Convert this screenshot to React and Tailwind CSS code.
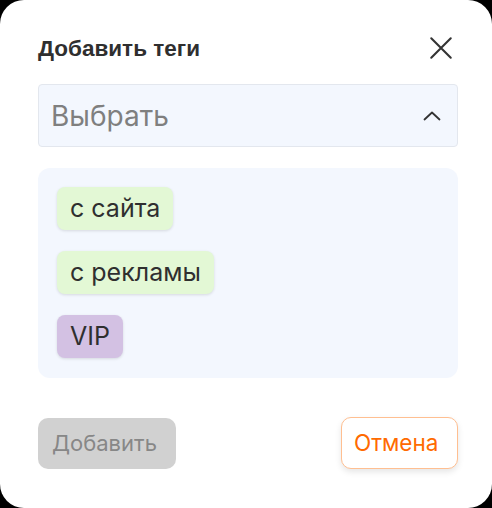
import { useState } from 'react';

const TAGS = [
  { name: 'с сайта', cls: 'bg-[#e3f8d5]' },
  { name: 'с рекламы', cls: 'bg-[#e3f8d5]' },
  { name: 'VIP', cls: 'bg-[#d3c1e3]' },
];

export default function App() {
  const [open, setOpen] = useState(true);

  return (
    <div className="w-[492px] h-[508px] bg-black">
      <div className="w-full h-full bg-white rounded-[24px] pl-[38px] pr-[34px] pt-[34px] flex flex-col font-['Inter',sans-serif]">
        <div className="flex items-center justify-between h-[28px]">
          <h2 className="text-[22.5px] font-bold text-[#2f2f2f] font-['Liberation_Sans',sans-serif] mt-[1px]">Добавить теги</h2>
          <button type="button" className="mr-[4px] text-[#333]">
            <svg width="26" height="26" viewBox="0 0 24 24" fill="none" stroke="currentColor" strokeWidth="1.9" strokeLinecap="round">
              <path d="M3 3 L21 21 M21 3 L3 21" />
            </svg>
          </button>
        </div>

        <button
          type="button"
          onClick={() => setOpen(!open)}
          className="mt-[22px] h-[63px] w-full rounded-[4px] border border-[#e3e7ee] bg-[#f3f7fe] flex items-center justify-between pl-[12px] pr-[16px]"
        >
          <span className="text-[28px] text-[#7f7f7f]">Выбрать</span>
          <svg width="18" height="10" viewBox="0 0 18 10" fill="none" stroke="#333" strokeWidth="1.8" strokeLinecap="round" strokeLinejoin="round">
            <path d="M1.5 8.5 L9 1.5 L16.5 8.5" />
          </svg>
        </button>

        {open && (
          <div className="mt-[21px] h-[210px] rounded-[12px] bg-[#f3f7fe] pt-[19px] pl-[19px] flex flex-col items-start gap-[21px]">
            {TAGS.map((t) => (
              <span
                key={t.name}
                className={`h-[43px] px-[13px] rounded-[8px] flex items-center text-[25px] text-[#2f2f2f] shadow-[0_1px_3px_rgba(0,0,0,0.12)] ${t.cls}`}
              >
                {t.name}
              </span>
            ))}
          </div>
        )}

        <div className="mt-[39px] flex items-center justify-between">
          <button type="button" disabled className="h-[51px] w-[138px] pl-[14px] text-left rounded-[10px] bg-[#d1d1d1] text-[22px] text-[#878787]">
            Добавить
          </button>
          <button type="button" className="h-[52px] w-[117px] pl-[12px] text-left rounded-[10px] bg-white border border-[#ffbf91] text-[22.5px] text-[#ff6a00] shadow-[0_3px_6px_rgba(0,0,0,0.1)]">
            Отмена
          </button>
        </div>
      </div>
    </div>
  );
}
